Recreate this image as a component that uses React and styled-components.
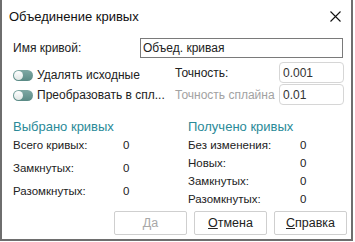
import React from 'react';
import styled, { createGlobalStyle } from 'styled-components';

const Global = createGlobalStyle`
  body {
    margin: 0;
    background: #fff;
    font-family: "Liberation Sans", Arial, sans-serif;
    font-size: 12px;
    color: #222;
  }
`;

const selected = [
  ['Всего кривых:', 0],
  ['Замкнутых:', 0],
  ['Разомкнутых:', 0],
];

const received = [
  ['Без изменения:', 0],
  ['Новых:', 0],
  ['Замкнутых:', 0],
  ['Разомкнутых:', 0],
];

export default function App() {
  return (
    <>
      <Global />
      <Dialog>
        <TitleBar>
          <Title>Объединение кривых</Title>
          <Close>
            <svg width="11" height="11" viewBox="0 0 11 11">
              <path d="M0.5 0.5 L10.5 10.5 M10.5 0.5 L0.5 10.5" stroke="#111" strokeWidth="1.1" />
            </svg>
          </Close>
        </TitleBar>
        <Body>
          <NameRow>
            <span>Имя кривой:</span>
            <NameInput>Объед. кривая</NameInput>
          </NameRow>
          <Options>
            <Toggles>
              <ToggleRow><Toggle /><span>Удалять исходные</span></ToggleRow>
              <ToggleRow><Toggle /><span>Преобразовать в спл...</span></ToggleRow>
            </Toggles>
            <Fields>
              <FieldLabel>Точность:</FieldLabel>
              <Field>0.001</Field>
              <FieldLabel $muted>Точность сплайна</FieldLabel>
              <Field>0.01</Field>
            </Fields>
          </Options>
          <Stats>
            <Group>
              <GroupTitle>Выбрано кривых</GroupTitle>
              <StatList $gap={9}>
                {selected.map(([k, v]) => (
                  <StatRow key={k} $valueAt={110}><span>{k}</span><span>{v}</span></StatRow>
                ))}
              </StatList>
            </Group>
            <Group>
              <GroupTitle>Получено кривых</GroupTitle>
              <StatList $gap={4}>
                {received.map(([k, v]) => (
                  <StatRow key={k} $valueAt={112}><span>{k}</span><span>{v}</span></StatRow>
                ))}
              </StatList>
            </Group>
          </Stats>
        </Body>
        <Footer>
          <Button disabled>Да</Button>
          <Button><u>О</u>тмена</Button>
          <Button><u>С</u>правка</Button>
        </Footer>
      </Dialog>
    </>
  );
}

const Dialog = styled.div`
  width: 353px;
  height: 241px;
  box-sizing: border-box;
  border: 2px solid #6e6e6e;
  border-top: none;
  display: flex;
  flex-direction: column;
  background: #fff;
`;

const TitleBar = styled.div`
  height: 32px;
  display: flex;
  align-items: center;
  justify-content: space-between;
  padding: 0 10px 0 7px;
`;

const Title = styled.div`
  font-size: 13px;
  color: #111;
`;

const Close = styled.div`
  display: flex;
  align-items: center;
`;

const Body = styled.div`
  padding: 0 8px 0 11px;
  flex: 1;
`;

const NameRow = styled.div`
  display: grid;
  grid-template-columns: 127px 1fr;
  align-items: center;
  margin-top: 6px;
`;

const NameInput = styled.div`
  height: 20px;
  box-sizing: border-box;
  border: 1px solid #7a7a7a;
  padding: 0 2px;
  display: flex;
  align-items: center;
  font-size: 12px;
`;

const Options = styled.div`
  display: grid;
  grid-template-columns: 162px 1fr;
  margin-top: 4px;
`;

const Toggles = styled.div`
  display: flex;
  flex-direction: column;
  gap: 6px;
  padding-top: 6px;
`;

const ToggleRow = styled.div`
  display: flex;
  align-items: center;
  gap: 4px;
  font-size: 12px;
  line-height: 14px;
`;

const Toggle = styled.span`
  position: relative;
  width: 20px;
  height: 11px;
  border-radius: 6px;
  background: linear-gradient(#7fa8a4, #5a8a85);
  &::after {
    content: '';
    position: absolute;
    left: 1px;
    top: 1px;
    width: 9px;
    height: 9px;
    border-radius: 50%;
    background: linear-gradient(#ffffff, #dfe6e5);
  }
`;

const Fields = styled.div`
  display: grid;
  grid-template-columns: 104px 65px;
  grid-auto-rows: 21px;
  row-gap: 1px;
  align-items: center;
`;

const FieldLabel = styled.span`
  color: ${p => (p.$muted ? '#a2a2a2' : '#222')};
  font-size: 12px;
`;

const Field = styled.div`
  height: 21px;
  box-sizing: border-box;
  border: 1px solid #d6d6d6;
  border-radius: 4px;
  padding: 0 3px;
  display: flex;
  align-items: center;
  color: #333;
  font-size: 12px;
`;

const Stats = styled.div`
  display: grid;
  grid-template-columns: 175px 1fr;
  margin-top: 14px;
`;

const Group = styled.div`
  display: flex;
  flex-direction: column;
`;

const GroupTitle = styled.div`
  color: #2a8a98;
  font-size: 13px;
  margin-bottom: 4px;
`;

const StatList = styled.div`
  display: flex;
  flex-direction: column;
  gap: ${p => p.$gap}px;
`;

const StatRow = styled.div`
  display: grid;
  grid-template-columns: ${p => p.$valueAt}px auto;
  font-size: 11.5px;
  line-height: 14px;
`;

const Footer = styled.div`
  display: flex;
  justify-content: flex-end;
  gap: 7px;
  padding: 0 4px 4px 0;
`;

const Button = styled.button`
  width: 73px;
  height: 24px;
  border: 1px solid #cfcfcf;
  border-radius: 2px;
  background: #fff;
  font-family: inherit;
  font-size: 12.5px;
  color: ${p => (p.disabled ? '#a8a8a8' : '#222')};
  padding: 0;
  u { text-decoration-thickness: 1px; }
`;
